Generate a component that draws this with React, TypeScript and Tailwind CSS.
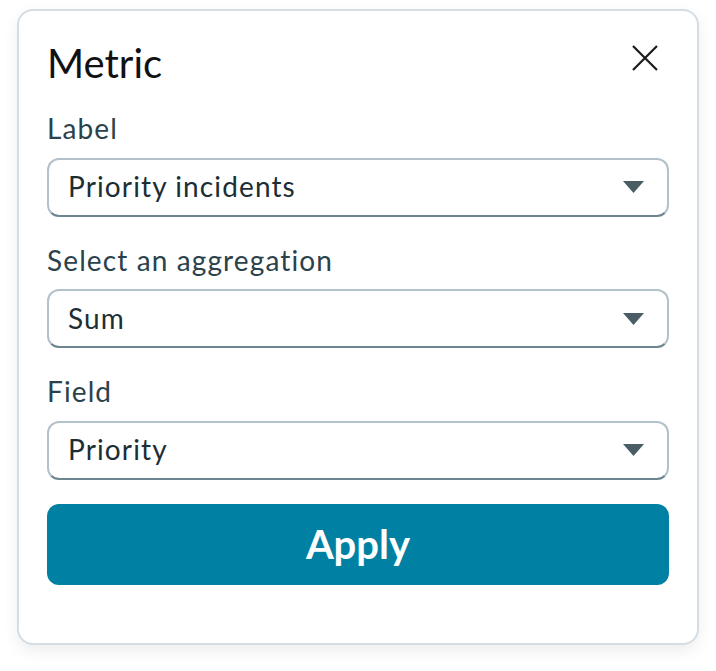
import React from "react";

function Caret() {
  return (
    <svg width="21" height="12" viewBox="0 0 21 12" className="shrink-0">
      <path d="M0 0 H21 L10.5 12 Z" fill="#4a5c64" />
    </svg>
  );
}

function Field({ label, value }: { label: string; value: string }) {
  return (
    <div className="flex flex-col">
      <div className="text-[28px] leading-[1.2] tracking-[0.04em] text-[#2b424b]">{label}</div>
      <div className="mt-3 h-[59px] flex items-center justify-between rounded-[12px] border-2 border-[#b3c2ca] border-b-[#6d8590] bg-white pl-[19px] pr-[23px]">
        <span className="text-[28px] leading-[1.2] tracking-[0.04em] text-[#1c2e35]">{value}</span>
        <Caret />
      </div>
    </div>
  );
}

export default function App() {
  return (
    <div
      className="w-[716px] h-[671px] bg-white pt-[9px] pl-[17px]"
      style={{ fontFamily: "Lato, 'Noto Sans', sans-serif" }}
    >
      <div className="w-[682px] h-[636px] rounded-[16px] border-2 border-[#d4dde3] bg-white shadow-[0_6px_16px_rgba(0,0,0,0.07)] pt-[28px] px-[28px] flex flex-col">
        <div className="flex items-start justify-between">
          <h1 className="text-[40px] leading-[1.2] text-[#111]">Metric</h1>
          <button className="mt-[6px] mr-[11px] w-[26px] h-[26px]">
            <svg width="26" height="26" viewBox="0 0 26 26">
              <path d="M1 1 L25 25 M25 1 L1 25" stroke="#1a1a1a" strokeWidth="2.2" />
            </svg>
          </button>
        </div>
        <div className="mt-[25px] flex flex-col gap-[27px]">
          <Field label="Label" value="Priority incidents" />
          <Field label="Select an aggregation" value="Sum" />
          <Field label="Field" value="Priority" />
        </div>
        <button className="mt-[24px] h-[81px] rounded-[12px] bg-[#0081a3] text-white text-[40px] font-bold leading-none">
          Apply
        </button>
      </div>
    </div>
  );
}
